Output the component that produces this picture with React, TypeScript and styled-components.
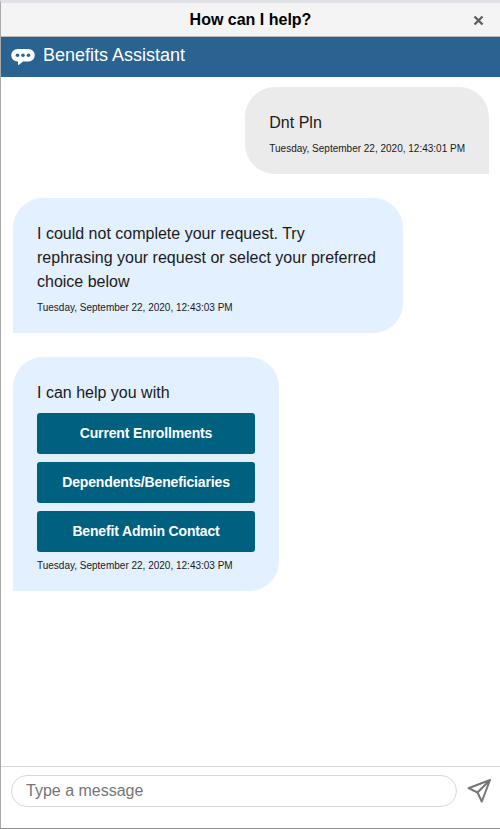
import { createGlobalStyle, styled } from "styled-components";

const stamp = "Tuesday, September 22, 2020, 12:43:0";

const options = ["Current Enrollments", "Dependents/Beneficiaries", "Benefit Admin Contact"];

export default function App() {
  return (
    <>
      <Global />
      <Window>
        <TitleBar>
          <Title>How can I help?</Title>
          <Close aria-label="Close">
            <svg width="11" height="11" viewBox="0 0 11 11">
              <path d="M1.5 1.5l8 8M9.5 1.5l-8 8" stroke="#5f5f5f" strokeWidth="2.4" />
            </svg>
          </Close>
        </TitleBar>
        <Header>
          <ChatIcon width="24" height="16" viewBox="0 0 24 16">
            <path
              d="M6.500 0h11a6.250 6.250 0 0 1 0 12.500h-5.500L8 15.700c-.5.400-1 .2-1-.4v-2.800h-.5A6.250 6.250 0 0 1 6.500 0z"
              fill="#fff"
            />
            <circle cx="6.500" cy="6.200" r="1.800" fill="#2a6291" />
            <circle cx="12" cy="6.200" r="1.800" fill="#2a6291" />
            <circle cx="17.500" cy="6.200" r="1.800" fill="#2a6291" />
          </ChatIcon>
          <HeaderText>Benefits Assistant</HeaderText>
        </Header>
        <Messages>
          <Bubble $mine>
            <Text>Dnt Pln</Text>
            <Stamp>{stamp}1 PM</Stamp>
          </Bubble>
          <Bubble>
            <Text>I could not complete your request. Try rephrasing your request or select your preferred choice below</Text>
            <Stamp>{stamp}3 PM</Stamp>
          </Bubble>
          <Bubble>
            <Text>I can help you with</Text>
            <Choices>
              {options.map((o) => (
                <Choice key={o}>{o}</Choice>
              ))}
            </Choices>
            <Stamp>{stamp}3 PM</Stamp>
          </Bubble>
        </Messages>
        <Footer>
          <Input placeholder="Type a message" />
          <Send aria-label="Send">
            <svg width="26" height="26" viewBox="0 0 26 26" fill="none">
              <path
                d="M24 2L2.500 10.200 11.500 14.500 15.800 23.500zM24 2L11.500 14.500"
                stroke="#757575"
                strokeWidth="2"
                strokeLinejoin="round"
              />
            </svg>
          </Send>
        </Footer>
      </Window>
    </>
  );
}

const Global = createGlobalStyle`
  * { box-sizing: border-box; }
  body {
    margin: 0;
    font-family: "Liberation Sans", Arial, sans-serif;
    background: #fff;
  }
`;

const Window = styled.div`
  display: flex;
  flex-direction: column;
  height: 829px;
  border-top: 3px solid #e1e1e8;
  border-left: 1px solid #aaa;
  border-bottom: 1px solid #8a8a8a;
`;

const TitleBar = styled.div`
  position: relative;
  display: flex;
  align-items: center;
  justify-content: center;
  height: 34px;
  flex: none;
  background: #f4f4f4;
  border-bottom: 1px solid #b9b9b9;
`;

const Title = styled.h1`
  margin: 0;
  font-size: 16px;
  font-weight: 700;
  color: #000;
`;

const Close = styled.button`
  position: absolute;
  top: 12px;
  right: 16px;
  display: flex;
  padding: 0;
  border: 0;
  background: none;
`;

const Header = styled.div`
  display: flex;
  align-items: center;
  gap: 8px;
  height: 40px;
  flex: none;
  padding: 0 0 3px 10px;
  background: #2a6291;
`;

const ChatIcon = styled.svg`
  margin-top: 3px;
`;

const HeaderText = styled.span`
  font-size: 18px;
  color: #fff;
`;

const Messages = styled.div`
  display: flex;
  flex-direction: column;
  gap: 24px;
  flex: 1;
  padding: 10px 11px 0 12px;
`;

const Bubble = styled.div<{ $mine?: boolean }>`
  padding: 24px 24px 19px;
  border-radius: ${(p) => (p.$mine ? "30px 30px 0 30px" : "30px 30px 30px 0")};
  background: ${(p) => (p.$mine ? "#ebebeb" : "#e3f0ff")};
  align-self: ${(p) => (p.$mine ? "flex-end" : "flex-start")};
  max-width: 390px;
`;

const Text = styled.div`
  font-size: 16px;
  line-height: 24px;
  color: #1a1a1a;
`;

const Stamp = styled.div`
  margin-top: 8px;
  font-size: 10px;
  line-height: 12px;
  color: #1a1a1a;
  white-space: nowrap;
`;

const Choices = styled.div`
  display: flex;
  flex-direction: column;
  gap: 8px;
  margin-top: 8px;
`;

const Choice = styled.button`
  height: 41px;
  width: 218px;
  padding: 0 0 2px;
  border: 0;
  border-radius: 3px;
  background: #00607f;
  color: #fff;
  font-family: inherit;
  font-size: 14px;
  font-weight: 700;
  letter-spacing: -0.15px;
`;

const Footer = styled.div`
  display: flex;
  align-items: center;
  height: 62px;
  flex: none;
  padding: 0 7px 14px 10px;
  border-top: 1px solid #d8d8d8;
`;

const Input = styled.input`
  width: 446px;
  height: 32px;
  padding: 0 14px;
  border: 1px solid #d8d8d8;
  border-radius: 16px;
  font-family: inherit;
  font-size: 16px;
  outline: none;
  &::placeholder { color: #757575; }
`;

const Send = styled.button`
  display: flex;
  margin-left: 9px;
  padding: 0;
  border: 0;
  background: none;
`;
